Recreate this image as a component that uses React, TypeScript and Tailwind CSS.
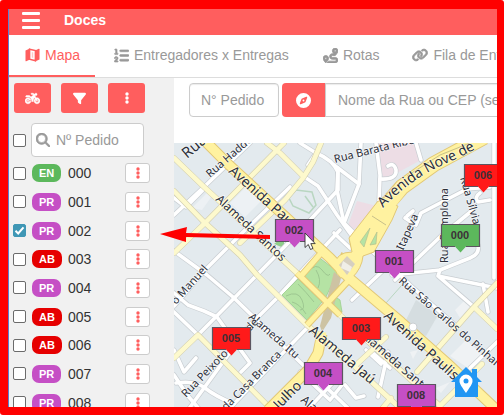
import React from "react";
import { FaListOl, FaRoute, FaLink, FaMotorcycle, FaFilter, FaCompass, FaMagnifyingGlass } from "react-icons/fa6";

type Status = "EN" | "PR" | "AB";

const orders: { id: string; status: Status; checked?: boolean }[] = [
  { id: "000", status: "EN" },
  { id: "001", status: "PR" },
  { id: "002", status: "PR", checked: true },
  { id: "003", status: "AB" },
  { id: "004", status: "PR" },
  { id: "005", status: "AB" },
  { id: "006", status: "AB" },
  { id: "007", status: "PR" },
  { id: "008", status: "PR" },
];

const badgeColor: Record<Status, string> = {
  EN: "bg-[#5cb85c]",
  PR: "bg-[#c54fc5]",
  AB: "bg-[#e60000]",
};

const GREEN = "#5cb85c";
const PURPLE = "#c54fc5";
const RED = "#ff1a1a";

const pins = [
  { id: "006", x: 464, y: 164, fill: RED },
  { id: "000", x: 441, y: 224, fill: GREEN },
  { id: "002", x: 275, y: 219, fill: PURPLE },
  { id: "001", x: 375, y: 250, fill: PURPLE },
  { id: "003", x: 342, y: 317, fill: RED },
  { id: "005", x: 212, y: 327, fill: RED },
  { id: "004", x: 304, y: 362, fill: PURPLE },
  { id: "008", x: 397, y: 384, fill: PURPLE },
];

const whiteStreets = [
  "M174 251 L207 275 L233 297 L303 365 L350 410",
  "M174 312 L198 335",
  "M174 293 L188 305 L204 311 L217 317 L250 363 L241 372",
  "M174 215 L205 186 L250 143",
  "M174 306 L205 270 L240 235 L290 187",
  "M198 335 L253 279 L297 234 L338 190 L338 172 Q333 160 316 153",
  "M188 410 L250 325 L278 297 L310 262 L340 230",
  "M228 410 L307 328",
  "M303 176 L318 186 L337 215 L352 236",
  "M316 153 L300 143 M316 153 L308 165",
  "M174 198 L186 207 L203 190",
  "M174 350 L184 372 L196 358 M176 383 Q195 380 205 388 T234 404",
  "M174 375 L188 396 L200 410",
  "M334 165 L359 184 L344 223 L374 253 L392 268",
  "M359 184 L361 143 M338 168 L337 190 L344 223",
  "M376 143 L380 175 L379 203",
  "M380 179 Q397 180 396 170 Q394 162 388 166",
  "M416 143 L421 160",
  "M405 218 L416 225 L421 213 L467 189 L490 187 M407 216 L413 211",
  "M395 280 L441 236 L474 209",
  "M494 143 L494 278 M480 193 Q474 197 478 202 L490 200",
  "M334 233 L350 248 M392 275 L440 270 L470 258 Q480 254 478 245 L472 238",
  "M440 270 L438 276 L474 307 M438 276 L497 288 M483 284 L488 312",
  "M352 300 L390 264 L410 285 L455 325",
  "M374 354 L390 368 M378 397 L388 352 M381 364 L366 350",
  "M345 385 L356 398 L364 396",
  "M470 368 L497 342 M310 407 L340 375",
  "M300 372 L330 400 L342 385",
];

const paleStreets = [
  "M174 158 L203 186 L297 273",
  "M174 191 L203 221 L240 255 L257 275 L307 325 L350 362 L402 410",
  "M174 253 L205 223 L279 148 L284 143",
  "M267 143 L280 153 L303 176",
  "M321 143 L313 162 L303 178 L285 200 L240 243",
  "M174 358 L198 335 L272 410",
  "M356 365 L386 337",
  "M361 335 L390 361 L440 406 L482 364",
  "M417 372 L474 307 L497 283 M474 307 L497 329",
  "M340 315 L361 335",
  "M391 398 L381 410",
];

const mapLabels = [
  { t: "Rua", x: 187, y: 159, r: -40, s: 15 },
  { t: "Rua Haddock Lobo", x: 210, y: 178, r: -41, s: 11 },
  { t: "Avenida Pau", x: 228, y: 172, r: 42, s: 14 },
  { t: "Alameda Santos", x: 215, y: 200, r: 43, s: 12 },
  { t: "Rua Barata Ribeiro", x: 335, y: 163, r: -14, s: 11 },
  { t: "Itapeva", x: 403, y: 251, r: -66, s: 11 },
  { t: "Rua Pamplona", x: 448, y: 263, r: -90, s: 11 },
  { t: "Rua Sílvia", x: 460, y: 178, r: 74, s: 11 },
  { t: "Rua São Carlos do Pinhal", x: 398, y: 282, r: 41, s: 11 },
  { t: "Avenida Paulista", x: 383, y: 317, r: 42, s: 14 },
  { t: "Alameda Santos", x: 361, y: 337, r: 41, s: 12 },
  { t: "Alameda Jaú", x: 308, y: 332, r: 40, s: 14 },
  { t: "Alameda Itu", x: 248, y: 318, r: 41, s: 11 },
  { t: "Rua Peixoto Gomide", x: 186, y: 398, r: -46, s: 11 },
  { t: "da Casa Branca", x: 226, y: 411, r: -45, s: 11 },
  { t: "o Manuel", x: 176, y: 305, r: -48, s: 11 },
  { t: "Julho", x: 279, y: 410, r: -45, s: 14 },
  { t: "Alameda", x: 300, y: 401, r: 41, s: 12 },
];

function Dots({ className }: { className: string }) {
  return (
    <svg viewBox="0 0 4 12" className={className} fill="currentColor" aria-hidden="true">
      <circle cx="2" cy="2" r="1.7" />
      <circle cx="2" cy="6" r="1.7" />
      <circle cx="2" cy="10" r="1.7" />
    </svg>
  );
}

function MapIcon() {
  return (
    <svg viewBox="0 0 15 14" className="h-[14px] w-[15px]" aria-hidden="true">
      <path d="M0.500 2.500 L5 0.600 V11.600 L1.200 13.200 Q0.500 13.400 0.500 12.700 Z" fill="currentColor" />
      <path d="M4.600 1.200 L10.400 2.600 V12.800 L4.600 11.200 Z" fill="none" stroke="currentColor" strokeWidth="1.500" />
      <path d="M10 2.400 L13.800 0.800 Q14.500 0.600 14.500 1.300 V11.500 L10 13.400 Z" fill="currentColor" />
      <path d="M6.800 4 L8.200 4.400 V10 L6.800 9.600 Z" fill="currentColor" opacity="0.350" />
    </svg>
  );
}

function StreetMap() {
  return (
    <svg
      viewBox="174 143 323 264"
      preserveAspectRatio="xMinYMin slice"
      className="block h-full w-full"
      role="img"
      aria-label="Mapa de entregas"
    >
      <rect x="174" y="143" width="1200" height="900" fill="#e3eaee" />
      <path d="M376 143 H416 L421 160 L384 180 L378 162 Z" fill="#eddde5" />
      <path d="M357 201 L377 206 L350 234 L347 228 Z" fill="#eddde5" />
      <path d="M230 203 L247 186 L262 200 L245 217 Z M192 208 L208 192 L212 196 L202 210 Z" fill="#edf1f4" />
      <path d="M405 322 L416 300 L438 315 L426 336 L412 331 Z" fill="#d5dde0" />
      <path d="M455 310 L466 299 L472 304 L460 318 Z M450 356 L466 340 L482 354 L468 368 Z M410 352 L418 350 L413 359 Z M436 388 L450 382 L441 393 Z" fill="#eff2f4" />
      <path d="M305 196 L313 207 M289 198 L296 190 L312 192 L316 205 L309 213 L293 206 Z" fill="none" stroke="#b9d6c1" strokeWidth="1.5" />
      <path d="M274 244 L284 236 L284 248 Z" fill="#8fcd8b" />
      <path d="M386 303 L402 285" stroke="#b9d6c1" strokeWidth="1" />

      <g fill="none" strokeLinejoin="round" strokeLinecap="round">
        {whiteStreets.map((d) => (
          <path key={d} d={d} stroke="#c9ced2" strokeWidth="5" />
        ))}
        {whiteStreets.map((d) => (
          <path key={d} d={d} stroke="#ffffff" strokeWidth="3.6" />
        ))}
        {paleStreets.map((d) => (
          <path key={d} d={d} stroke="#d3cfb0" strokeWidth="5.8" />
        ))}
        {paleStreets.map((d) => (
          <path key={d} d={d} stroke="#fdf9cd" strokeWidth="4.6" />
        ))}
      </g>

      <g fill="#b5e3a4" stroke="#9ccf8e" strokeWidth="0.8">
        <path d="M317 256 L338 272 L331 286 L325 299 L302 274 Z" />
        <path d="M282 295 L298 279 L322 302 L307 320 Z" />
        <path d="M334 296 L340 300 L342 312 L337 310 L331 303 Z" />
      </g>
      <path d="M308 272 Q316 262 322 270 T330 274 M318 288 Q322 280 316 270 M286 296 Q298 290 302 300 T300 310 M298 284 Q306 292 314 302 M292 302 Q300 304 306 314" fill="none" stroke="#97bf8c" strokeWidth="0.8" />
      <path d="M334 272 L341 278 L331 318 L322 332 L320 326 Z" fill="#cdc3a3" />

      <g fill="none" strokeLinejoin="round">
        <g stroke="#e2c877">
          <path d="M484 137 L434 164 L402 187 L374 219" strokeWidth="16" />
          <path d="M322 334 L318 353 L308 370 L268 410" strokeWidth="11" />
          <path d="M297 273 L340 315" strokeWidth="7" />
          <path d="M307 325 L348 281 M301 276 L322 252" strokeWidth="7" />
          <path d="M202 138 L227 163 L290 221 L330 258 L349 278 L401 322 L447 363 L500 413" strokeWidth="11" />
          <path d="M353 240 L358 258 L343 277 M360 262 L340 256" strokeWidth="8" />
        </g>
        <path d="M378 201 L349 238 L352 252 Q336 252 334 266 Q338 283 352 278 Q362 268 363 256 L374 252 L392 220 L398 206 Z" fill="#fff2a0" stroke="#e2c877" />
        <g stroke="#fff2a0">
          <path d="M484 137 L434 164 L402 187 L382 212" strokeWidth="14" />
          <path d="M322 332 L318 353 L308 370 L268 410" strokeWidth="9" />
          <path d="M297 273 L340 315" strokeWidth="5" />
          <path d="M307 325 L348 281 M301 276 L322 252" strokeWidth="5" />
          <path d="M202 138 L227 163 L290 221 L330 258 L349 278 L401 322 L447 363 L500 413" strokeWidth="9" />
        </g>
        <path d="M407 176 L440 155 L470 143 M372 216 L386 225" stroke="#b8b184" strokeWidth="0.8" />
      </g>
      <path d="M360 242 L370 228 L364 247 Z M370 245 L377 232 L376 244 Z" fill="#b5e3a4" stroke="#b0b98a" strokeWidth="0.6" />
      <path d="M339 265 L347 256 L355 264 L347 275 Z" fill="#d6cfc0" />
      <path d="M343 261 L352 267 L350 272 L341 268 Z" fill="#f0eee8" />
      <circle cx="413" cy="327" r="4" fill="#ffffff" stroke="#c9ced2" />

      <g className="font-['Noto_Sans',sans-serif]" fill="#2b2f3a" stroke="#ffffff" strokeWidth="1.5" strokeOpacity="0.6" paintOrder="stroke">
        {mapLabels.map((l) => (
          <text key={l.t + l.x} fontSize={l.s} transform={`translate(${l.x} ${l.y}) rotate(${l.r})`}>
            {l.t}
          </text>
        ))}
        <path id="nove-de-julho" d="M383 208 Q412 178 445 164 T520 122" fill="none" stroke="none" />
        <text fontSize="14">
          <textPath href="#nove-de-julho">Avenida Nove de</textPath>
        </text>
      </g>

      {pins.map((p) => (
        <g key={p.id} transform={`translate(${p.x} ${p.y})`}>
          <path d="M0.5 0.5 H38.5 V22.5 H25 L19.5 28.5 L14 22.5 H0.5 Z" fill={p.fill} />
          <path d="M14 22.5 H0.5 V0.5 H38.5 V22.5 H25" fill="none" stroke="#5c5560" strokeWidth="1.2" />
          <text x="19" y="15" fontSize="11" textAnchor="middle" fill="#3c3038" className="font-['Liberation_Sans',Arial,sans-serif] font-bold">
            {p.id}
          </text>
        </g>
      ))}

      <path d="M466 367 L472 373 V369 H477 V377 L482 382 H478 V397 H455 V382 H451 Z" fill="#2196f3" />
      <path d="M466 393 C462 387 459.500 384 459.500 381 A6.500 6.500 0 0 1 472.500 381 C472.500 384 470 387 466 393 Z" fill="#ffffff" />
      <circle cx="466" cy="381" r="2.500" fill="#2196f3" />
      <path d="M305 233 V247.500 L308.300 244.500 L310.500 249.500 L313 248.400 L310.800 243.600 H315.200 Z" fill="#ffffff" stroke="#333333" strokeWidth="0.9" />
    </svg>
  );
}

const boxClass =
  "m-0 size-[13px] shrink-0 appearance-none rounded-[2px] border border-[#6b6b6b] bg-white checked:border-[#3f97b5] checked:bg-[#3f97b5]";

function Check({ label, defaultChecked }: { label: string; defaultChecked?: boolean }) {
  return (
    <span className="relative flex">
      <input type="checkbox" aria-label={label} defaultChecked={defaultChecked} className={`peer ${boxClass}`} />
      <svg viewBox="0 0 13 13" className="pointer-events-none absolute inset-0 hidden size-[13px] peer-checked:block" aria-hidden="true">
        <path d="M2.500 6.800 L5.200 9.500 L10.500 3.300" fill="none" stroke="#fff" strokeWidth="2" />
      </svg>
    </span>
  );
}

const actionClass = "flex h-[30px] w-[37px] items-center justify-center rounded-[3px] bg-[#ff5e5e] text-white";
const tabClass = "flex h-full shrink-0 items-center gap-[5px] border-b-2 border-transparent whitespace-nowrap";

export default function App() {
  return (
    <div className="h-screen bg-white">
      <div className="relative flex h-full flex-col overflow-hidden rounded-[3px] border-t-[9px] border-r-[7px] border-b-8 border-l-8 border-[#ff0000] bg-white font-['Liberation_Sans',Arial,sans-serif] text-sm text-[#333]">
        <div className="flex min-h-0 flex-1 flex-col border-l border-[#5b7fd0]">
          <header className="flex h-[26px] shrink-0 items-center gap-6 bg-[#ff5e5e] pb-1 pl-[13px] text-white">
            <button type="button" aria-label="Menu" className="flex w-[18px] flex-col gap-1">
              <span className="h-[3px] w-full rounded-[1px] bg-white" />
              <span className="h-[3px] w-full rounded-[1px] bg-white" />
              <span className="h-[3px] w-full rounded-[1px] bg-white" />
            </button>
            <h1 className="text-sm font-bold">Doces</h1>
          </header>

          <nav className="flex h-[43px] shrink-0 overflow-hidden border-b border-[#ddd] text-[#999]">
            <a href="#mapa" className="flex h-full w-[86px] shrink-0 items-center gap-[5px] border-b-2 border-[#ff5e5e] pl-4 text-[#ff5e5e]">
              <MapIcon />
              Mapa
            </a>
            <a href="#entregas" className={`${tabClass} pr-[17px] pl-[19px]`}>
              <FaListOl className="size-[15px] stroke-current stroke-[20]" />
              Entregadores x Entregas
            </a>
            <a href="#rotas" className={`${tabClass} px-[17px]`}>
              <FaRoute className="size-[15px] stroke-current stroke-[28]" />
              Rotas
            </a>
            <a href="#fila" className={`${tabClass} px-4`}>
              <FaLink className="size-[16px] stroke-current stroke-[32]" />
              Fila de Entrega
            </a>
          </nav>

          <div className="flex min-h-0 flex-1">
            <aside className="flex w-[165px] shrink-0 flex-col overflow-hidden bg-[#f1f1f1] pt-[5px]">
              <div className="flex gap-[10px] pl-[5px]">
                <button type="button" aria-label="Entregadores" className={actionClass}>
                  <FaMotorcycle className="size-[15px] stroke-current stroke-[20]" />
                </button>
                <button type="button" aria-label="Filtrar" className={actionClass}>
                  <FaFilter className="size-[13px]" />
                </button>
                <button type="button" aria-label="Opções" className={actionClass}>
                  <Dots className="h-3 w-1" />
                </button>
              </div>

              <div className="mt-[10px] flex items-center gap-[5px] pl-1">
                <Check label="Selecionar todos" />
                <label className="flex h-[34px] w-[113px] items-center gap-[6px] rounded-[4px] border border-[#ccc] bg-white pl-1">
                  <FaMagnifyingGlass className="size-[14px] shrink-0 stroke-current stroke-[24] text-[#999]" />
                  <input aria-label="Buscar pedido" placeholder="Nº Pedido" className="w-full min-w-0 bg-transparent outline-none placeholder:text-[#999]" />
                </label>
              </div>

              <ul className="mt-[2px] grid h-[258px] shrink-0 grid-rows-9">
                {orders.map((o) => (
                  <li key={o.id} className="flex items-center pl-1">
                    <Check label={`Pedido ${o.id}`} defaultChecked={o.checked} />
                    <span className="ml-[6px] flex w-9 shrink-0">
                      <span className={`rounded-[7px] px-[7px] text-[11px] leading-[18px] font-bold text-white ${badgeColor[o.status]}`}>
                        {o.status}
                      </span>
                    </span>
                    <span className="w-[57px]">{o.id}</span>
                    <button type="button" aria-label={`Opções do pedido ${o.id}`} className="flex h-5 w-[25px] items-center justify-center rounded-[3px] border border-[#ccc] bg-white text-[#ff5e5e]">
                      <Dots className="h-3 w-1" />
                    </button>
                  </li>
                ))}
              </ul>
            </aside>

            <main className="flex min-w-0 flex-1 flex-col">
              <form className="flex shrink-0 overflow-hidden pt-[5px] pb-[26px] pl-[15px]">
                <input aria-label="Número do pedido" placeholder="N° Pedido" className="mr-[3px] h-[34px] w-[90px] shrink-0 rounded-[4px] border border-[#ccc] px-[11px] text-sm shadow-[inset_0_1px_1px_rgba(0,0,0,0.08)] outline-none placeholder:text-[#999]" />
                <button type="button" aria-label="Localizar" className="flex h-[34px] w-[43px] shrink-0 items-center justify-center rounded-l-[4px] bg-[#ff5e5e] text-white">
                  <FaCompass className="size-[15px]" />
                </button>
                <input aria-label="Endereço" placeholder="Nome da Rua ou CEP (sem traço)" className="h-[34px] min-w-[232px] flex-1 border border-[#ccc] px-3 text-sm shadow-[inset_0_1px_1px_rgba(0,0,0,0.08)] outline-none placeholder:text-[#999]" />
              </form>
              <div className="min-h-0 flex-1">
                <StreetMap />
              </div>
            </main>
          </div>
        </div>

        <svg viewBox="0 0 112 18" className="pointer-events-none absolute top-[217px] left-[152px] h-[18px] w-[112px]" aria-hidden="true">
          <path d="M0 8 L27 1 L26 7 L110 9 V13 L26 11 V16 Z" fill="#ff0000" />
        </svg>
      </div>
    </div>
  );
}
